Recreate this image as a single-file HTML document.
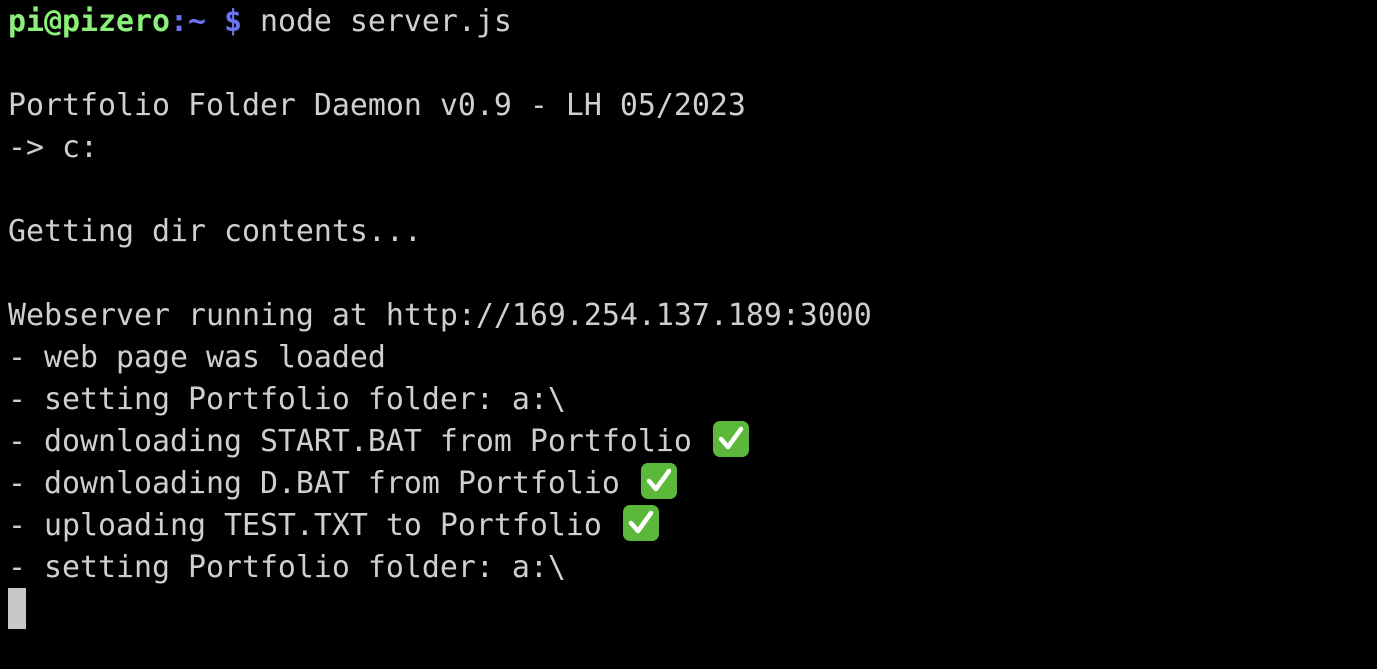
<!DOCTYPE html>
<html><head><style>
html,body{margin:0;padding:0;background:#000;width:1377px;height:669px;overflow:hidden}
.t{position:absolute;left:8px;top:1px;font-family:"DejaVu Sans Mono","Liberation Mono",monospace;font-size:29.9px;line-height:42px;color:#cfcfcf;white-space:pre}
.g{color:#8af07a;font-weight:bold}.b{color:#6b73f0;font-weight:bold}
.ck{display:inline-block;width:38px;height:36px;vertical-align:-6px;margin-left:2px;line-height:0}
.cur{position:absolute;left:8px;top:588px;width:18px;height:41px;background:#c8c8c8}
</style></head><body>
<div class="t"><span class="g">pi@pizero</span><span class="b">:~ $</span> node server.js

Portfolio Folder Daemon v0.9 - LH 05/2023
-&gt; c:

Getting dir contents...

Webserver running at http://169.254.137.189:3000
- web page was loaded
- setting Portfolio folder: a:\
- downloading START.BAT from Portfolio <svg class="ck" viewBox="0 0 38 36"><rect x="1" y="0" width="36" height="36" rx="7" fill="#5bb83a"/><path d="M9 18 L16 26 L29 8" stroke="#fff" stroke-width="4.5" fill="none" stroke-linecap="round" stroke-linejoin="round"/></svg>
- downloading D.BAT from Portfolio <svg class="ck" viewBox="0 0 38 36"><rect x="1" y="0" width="36" height="36" rx="7" fill="#5bb83a"/><path d="M9 18 L16 26 L29 8" stroke="#fff" stroke-width="4.5" fill="none" stroke-linecap="round" stroke-linejoin="round"/></svg>
- uploading TEST.TXT to Portfolio <svg class="ck" viewBox="0 0 38 36"><rect x="1" y="0" width="36" height="36" rx="7" fill="#5bb83a"/><path d="M9 18 L16 26 L29 8" stroke="#fff" stroke-width="4.5" fill="none" stroke-linecap="round" stroke-linejoin="round"/></svg>
- setting Portfolio folder: a:\</div>
<div class="cur"></div>
</body></html>
